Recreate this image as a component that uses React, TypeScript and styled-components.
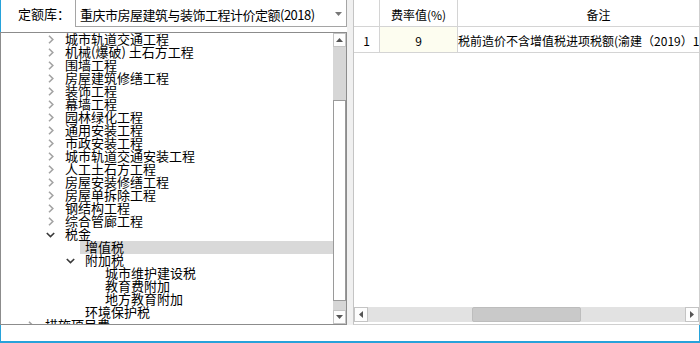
import React from "react";
import styled, { createGlobalStyle } from "styled-components";

type NodeState = "collapsed" | "expanded" | "leaf";

interface TreeNode {
  label: string;
  level: number;
  state: NodeState;
  selected?: boolean;
}

const BLUE = "#27a2da";
const FONT = `"SimSun", "Noto Sans CJK SC", "Noto Sans", sans-serif`;

const nodes: TreeNode[] = [
  { label: "城市轨道交通工程", level: 1, state: "collapsed" },
  { label: "机械(爆破) 土石方工程", level: 1, state: "collapsed" },
  { label: "围墙工程", level: 1, state: "collapsed" },
  { label: "房屋建筑修缮工程", level: 1, state: "collapsed" },
  { label: "装饰工程", level: 1, state: "collapsed" },
  { label: "幕墙工程", level: 1, state: "collapsed" },
  { label: "园林绿化工程", level: 1, state: "collapsed" },
  { label: "通用安装工程", level: 1, state: "collapsed" },
  { label: "市政安装工程", level: 1, state: "collapsed" },
  { label: "城市轨道交通安装工程", level: 1, state: "collapsed" },
  { label: "人工土石方工程", level: 1, state: "collapsed" },
  { label: "房屋安装修缮工程", level: 1, state: "collapsed" },
  { label: "房屋单拆除工程", level: 1, state: "collapsed" },
  { label: "钢结构工程", level: 1, state: "collapsed" },
  { label: "综合管廊工程", level: 1, state: "collapsed" },
  { label: "税金", level: 1, state: "expanded" },
  { label: "增值税", level: 2, state: "leaf", selected: true },
  { label: "附加税", level: 2, state: "expanded" },
  { label: "城市维护建设税", level: 3, state: "leaf" },
  { label: "教育费附加", level: 3, state: "leaf" },
  { label: "地方教育附加", level: 3, state: "leaf" },
  { label: "环境保护税", level: 2, state: "leaf" },
  { label: "措施项目费", level: 0, state: "collapsed" },
];

export default function App() {
  return (
    <>
      <GlobalStyle />
      <Frame>
        <Main>
          <LeftPanel>
            <Header>
              <FieldLabel>定额库：</FieldLabel>
              <Select>
                <SelectText>重庆市房屋建筑与装饰工程计价定额(2018)</SelectText>
                <SelectArrow>
                  <svg width="7" height="4" viewBox="0 0 7 4">
                    <path d="M0 0H7L3.5 4Z" fill="#777" />
                  </svg>
                </SelectArrow>
              </Select>
            </Header>
            <Tree>
              <TreeRows>
                {nodes.map((node, i) => (
                  <TreeRow key={i} $level={node.level}>
                    <Toggle>
                      {node.state === "collapsed" && <ChevronRight />}
                      {node.state === "expanded" && <ChevronDown />}
                    </Toggle>
                    <RowLabel $selected={!!node.selected}>{node.label}</RowLabel>
                  </TreeRow>
                ))}
              </TreeRows>
              <VScroll>
                <ScrollButton>
                  <svg width="7" height="4" viewBox="0 0 7 4">
                    <path d="M0 4H7L3.5 0Z" fill="#555" />
                  </svg>
                </ScrollButton>
                <Track $size={53} />
                <VThumb />
                <Track $size={9} />
                <ScrollButton>
                  <svg width="7" height="4" viewBox="0 0 7 4">
                    <path d="M0 0H7L3.5 4Z" fill="#555" />
                  </svg>
                </ScrollButton>
              </VScroll>
            </Tree>
          </LeftPanel>
          <Splitter />
          <RightPanel>
            <Grid>
              <HeadCell />
              <HeadCell>费率值(%)</HeadCell>
              <HeadCell>备注</HeadCell>
              <Cell $align="center">1</Cell>
              <Cell $align="center" $editable>
                9
              </Cell>
              <Cell $align="left">税前造价不含增值税进项税额(渝建（2019）143号)</Cell>
            </Grid>
            <HScroll>
              <HButton>
                <svg width="4" height="7" viewBox="0 0 4 7">
                  <path d="M4 0V7L0 3.5Z" fill="#555" />
                </svg>
              </HButton>
              <HTrack>
                <HThumb />
              </HTrack>
              <HButton>
                <svg width="4" height="7" viewBox="0 0 4 7">
                  <path d="M0 0V7L4 3.5Z" fill="#555" />
                </svg>
              </HButton>
            </HScroll>
          </RightPanel>
        </Main>
        <Footer />
      </Frame>
    </>
  );
}

function ChevronRight() {
  return (
    <svg width="6" height="9" viewBox="0 0 6 9" style={{ marginLeft: 3 }}>
      <polyline points="1,0.8 4.8,4.5 1,8.2" fill="none" stroke="#a3a3a3" strokeWidth="1.6" />
    </svg>
  );
}

function ChevronDown() {
  return (
    <svg width="9" height="6" viewBox="0 0 9 6" style={{ marginLeft: 1 }}>
      <polyline points="0.8,1 4.5,4.6 8.2,1" fill="none" stroke="#3a3a3a" strokeWidth="1.6" />
    </svg>
  );
}

const GlobalStyle = createGlobalStyle`
  body {
    margin: 0;
    background: #fff;
    font-family: ${FONT};
    color: #000;
  }
`;

const Frame = styled.div`
  width: 700px;
  height: 343px;
  display: flex;
  flex-direction: column;
  overflow: hidden;
  background: #fff;
`;

const Main = styled.div`
  display: flex;
  height: 325px;
`;

const LeftPanel = styled.div`
  width: 347px;
  display: flex;
  flex-direction: column;
`;

const Header = styled.div`
  height: 32px;
  display: flex;
  align-items: flex-start;
  border-left: 1px solid ${BLUE};
  box-sizing: border-box;
`;

const FieldLabel = styled.div`
  width: 74px;
  box-sizing: border-box;
  padding-left: 17px;
  height: 27px;
  line-height: 28px;
  font-size: 13px;
`;

const Select = styled.div`
  flex: 1;
  height: 27px;
  box-sizing: border-box;
  border: 1px solid #a5a5a5;
  border-top: none;
  display: flex;
  align-items: center;
  padding-left: 4px;
`;

const SelectText = styled.span`
  font-size: 13px;
  line-height: 13px;
  letter-spacing: -0.5px;
  padding-top: 2px;
  white-space: nowrap;
`;

const SelectArrow = styled.span`
  margin-left: auto;
  width: 9px;
  margin-right: 2px;
  display: flex;
  padding-top: 1px;
`;

const Tree = styled.div`
  flex: 1;
  display: flex;
  border: 1px solid #8c8c8c;
  overflow: hidden;
`;

const TreeRows = styled.div`
  flex: 1;
  overflow: hidden;
`;

const TreeRow = styled.div<{ $level: number }>`
  height: 13px;
  display: flex;
  align-items: center;
  padding-left: ${(p) => 24 + p.$level * 20}px;
`;

const Toggle = styled.div`
  width: 15px;
  flex: none;
  display: flex;
  align-items: center;
`;

const RowLabel = styled.div<{ $selected: boolean }>`
  flex: 1;
  height: 13px;
  padding-left: 5px;
  font-size: 13px;
  line-height: 12px;
  white-space: nowrap;
  background: ${(p) => (p.$selected ? "#d9d9d9" : "transparent")};
`;

const VScroll = styled.div`
  width: 13px;
  flex: none;
  display: flex;
  flex-direction: column;
  background: #d6d6d6;
`;

const ScrollButton = styled.div`
  height: 14px;
  box-sizing: border-box;
  border: 1px solid #c4c4c4;
  background: #fdfdfd;
  display: flex;
  align-items: center;
  justify-content: center;
  flex: none;
`;

const Track = styled.div<{ $size: number }>`
  height: ${(p) => p.$size}px;
  flex: none;
`;

const VThumb = styled.div`
  flex: 1;
  box-sizing: border-box;
  border: 1px solid #9a9a9a;
  background: #fff;
`;

const Splitter = styled.div`
  width: 6px;
  background: #f0f0f0;
`;

const RightPanel = styled.div`
  flex: 1;
  display: flex;
  flex-direction: column;
  border-left: 1px solid #c4c4c4;
  border-right: 1px solid #cfcfcf;
  border-bottom: 1px solid #cfcfcf;
  background: #fff;
  overflow: hidden;
`;

const Grid = styled.div`
  flex: 1;
  display: grid;
  grid-template-columns: 26px 78px 282px;
  grid-template-rows: 27px 26px;
  align-content: start;
  overflow: hidden;
  font-size: 12px;
`;

const HeadCell = styled.div`
  border-right: 1px solid #d4d4d4;
  border-bottom: 1px solid #d4d4d4;
  display: flex;
  align-items: center;
  justify-content: center;
  padding-top: 2px;
  white-space: nowrap;
`;

const Cell = styled.div<{ $align: "left" | "center"; $editable?: boolean }>`
  border-right: 1px solid #d4d4d4;
  border-bottom: 1px solid #d4d4d4;
  display: flex;
  align-items: center;
  justify-content: ${(p) => (p.$align === "center" ? "center" : "flex-start")};
  background: ${(p) => (p.$editable ? "#fdfdf0" : "#fff")};
  padding-top: 2px;
  white-space: nowrap;
  overflow: hidden;
`;

const HScroll = styled.div`
  height: 15px;
  display: flex;
  background: #e2e2e2;
  margin-bottom: 2px;
  flex: none;
`;

const HButton = styled.div`
  width: 14px;
  box-sizing: border-box;
  border: 1px solid #c4c4c4;
  background: #fdfdfd;
  display: flex;
  align-items: center;
  justify-content: center;
  flex: none;
`;

const HTrack = styled.div`
  flex: 1;
  display: flex;
  padding-left: 104px;
`;

const HThumb = styled.div`
  width: 109px;
  height: 15px;
  box-sizing: border-box;
  border: 1px solid #bdbdbd;
  border-radius: 2px;
  background: #c9c9c9;
`;

const Footer = styled.div`
  flex: 1;
  border-left: 1px solid ${BLUE};
  border-right: 1px solid ${BLUE};
  border-bottom: 2px solid ${BLUE};
`;
